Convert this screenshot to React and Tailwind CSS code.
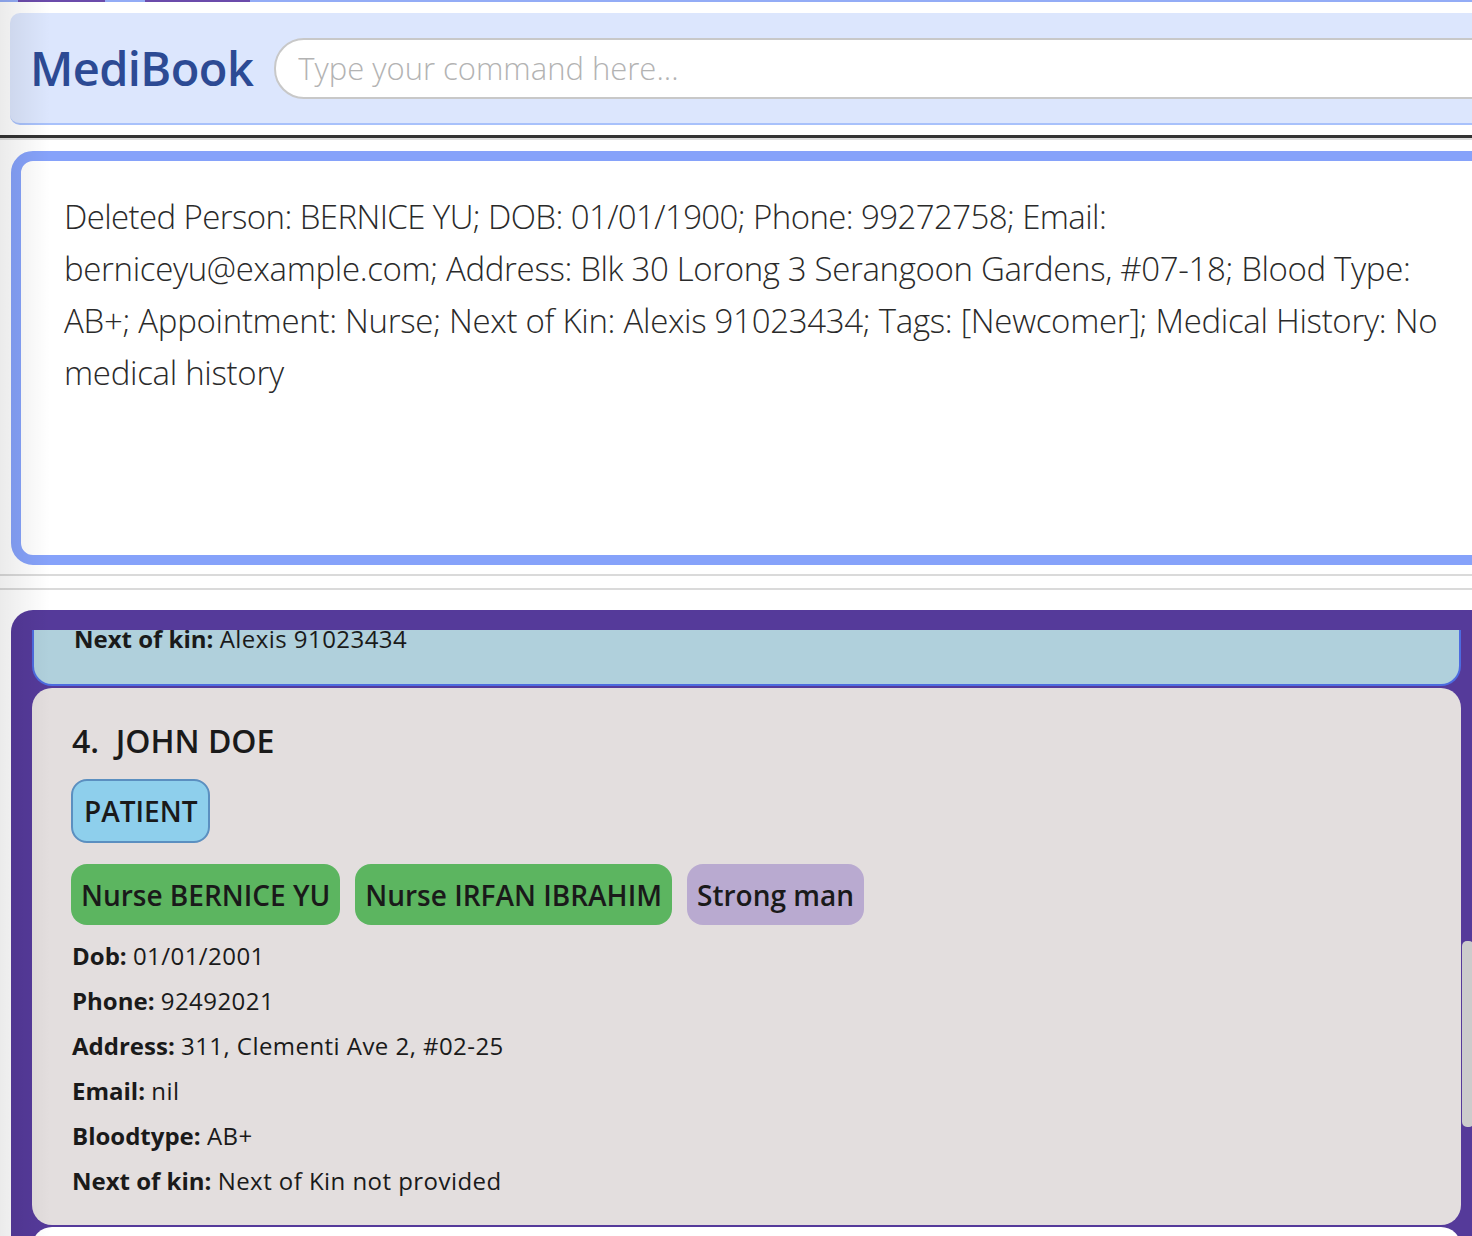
import React from "react";

const Field = ({ label, value }) => (
  <div className="text-[24px] leading-[45px] text-[#1a1a1a] whitespace-nowrap">
    <span className="font-bold">{label}:</span> <span className="tracking-[0.45px]">{value}</span>
  </div>
);

const Chip = ({ children, color }) => (
  <div
    className={`flex h-[61px] items-center rounded-[16px] px-[10px] text-[28px] font-semibold text-[#1a1a1a] whitespace-nowrap ${color}`}
  >
    {children}
  </div>
);

export default function App() {
  return (
    <div className="relative w-[1472px] h-[1236px] overflow-hidden bg-white font-['Open_Sans',sans-serif]">
      <div className="w-[1520px]">
        {/* top strip */}
        <div className="flex h-[2px] bg-[#93acf6]">
          <div className="ml-[18px] w-[87px] bg-[#6b4bab]" />
          <div className="ml-[40px] w-[105px] bg-[#6b4bab]" />
        </div>

        {/* header */}
        <div className="ml-[10px] mt-[11px] h-[112px] flex items-center rounded-l-[10px] bg-[#dce6fd] border-b-2 border-[#a8c1fb] pl-[20px]">
          <div className="text-[47px] font-semibold text-[#2c4a94] tracking-[-0.6px] leading-none">MediBook</div>
          <input
            className="ml-[21px] h-[61px] flex-1 rounded-[30px] border-2 border-[#c8c8c8] bg-white pl-[22px] text-[31px] font-light outline-none placeholder:text-[#b3b3b3]"
            placeholder="Type your command here..."
          />
        </div>

        {/* divider */}
        <div className="mt-[10px] h-[3px] bg-[#333333]" />
        <div className="h-[2px] bg-[#dcdcdc]" />

        {/* result box */}
        <div className="ml-[11px] mt-[11px] h-[414px] rounded-[22px] border-[10px] border-[#86a2fa] bg-white pl-[43px] pt-[30px]">
          <div className="text-[33px] font-light leading-[52px] text-[#2a2a2a] whitespace-nowrap">
            <div className="tracking-[-0.6px]">Deleted Person: BERNICE YU; DOB: 01/01/1900; Phone: 99272758; Email:</div>
            <div className="tracking-[-0.35px]">berniceyu@example.com; Address: Blk 30 Lorong 3 Serangoon Gardens, #07-18; Blood Type:</div>
            <div className="tracking-[-0.3px]">AB+; Appointment: Nurse; Next of Kin: Alexis 91023434; Tags: [Newcomer]; Medical History: No</div>
            <div className="tracking-[-0.3px]">medical history</div>
          </div>
        </div>

        {/* split dividers */}
        <div className="mt-[9px] h-[2px] bg-[#dadada]" />
        <div className="mt-[12px] h-[2px] bg-[#dadada]" />

        {/* list panel */}
        <div className="ml-[11px] mt-[20px] h-[700px] rounded-tl-[22px] bg-[#553a9a] pl-[21px] pt-[20px]">
          <div className="flex w-[1429px] flex-col gap-[2px]">
            {/* card 3 (scrolled) */}
            <div className="flex h-[56px] flex-col justify-end rounded-b-[20px] border-x-2 border-b-2 border-[#4d6be0] bg-[#b0d0dc] pb-[33px] pl-[40px]">
              <div className="text-[24px] leading-[24px] text-[#1a1a1a] whitespace-nowrap">
                <span className="font-bold">Next of kin:</span> <span className="tracking-[0.45px]">Alexis 91023434</span>
              </div>
            </div>

            {/* card 4 */}
            <div className="rounded-[20px] bg-[#e3dede] pl-[40px] pt-[33px] pb-[22px]">
              <div className="text-[32px] font-semibold leading-[40px] text-[#1a1a1a] whitespace-nowrap">
                4.&nbsp;&nbsp;JOHN DOE
              </div>
              <div className="mt-[18px] flex">
                <div className="-ml-px flex h-[64px] items-center rounded-[16px] border-2 border-[#5b8fc0] bg-[#8ecfec] px-[11px] text-[28px] font-semibold text-[#1a1a1a]">
                  PATIENT
                </div>
              </div>
              <div className="-ml-px mt-[21px] flex gap-[15px]">
                <Chip color="bg-[#5cb560]">Nurse BERNICE YU</Chip>
                <Chip color="bg-[#5cb560]">Nurse IRFAN IBRAHIM</Chip>
                <Chip color="bg-[#b9aad0]">Strong man</Chip>
              </div>
              <div className="mt-[8px]">
                <Field label="Dob" value="01/01/2001" />
                <Field label="Phone" value="92492021" />
                <Field label="Address" value="311, Clementi Ave 2, #02-25" />
                <Field label="Email" value="nil" />
                <Field label="Bloodtype" value="AB+" />
                <Field label="Next of kin" value="Next of Kin not provided" />
              </div>
            </div>

            {/* next card */}
            <div className="h-[60px] rounded-[20px] bg-white" />
          </div>
        </div>
      </div>

      {/* scrollbar thumb */}
      <div className="absolute left-[1462px] top-[941px] h-[186px] w-[12px] rounded-[5px] bg-[#cccccc]" />

      {/* left edge shading */}
      <div className="pointer-events-none absolute left-0 top-0 h-full w-[50px] bg-gradient-to-r from-[rgba(0,0,0,0.08)] to-transparent" />
    </div>
  );
}
